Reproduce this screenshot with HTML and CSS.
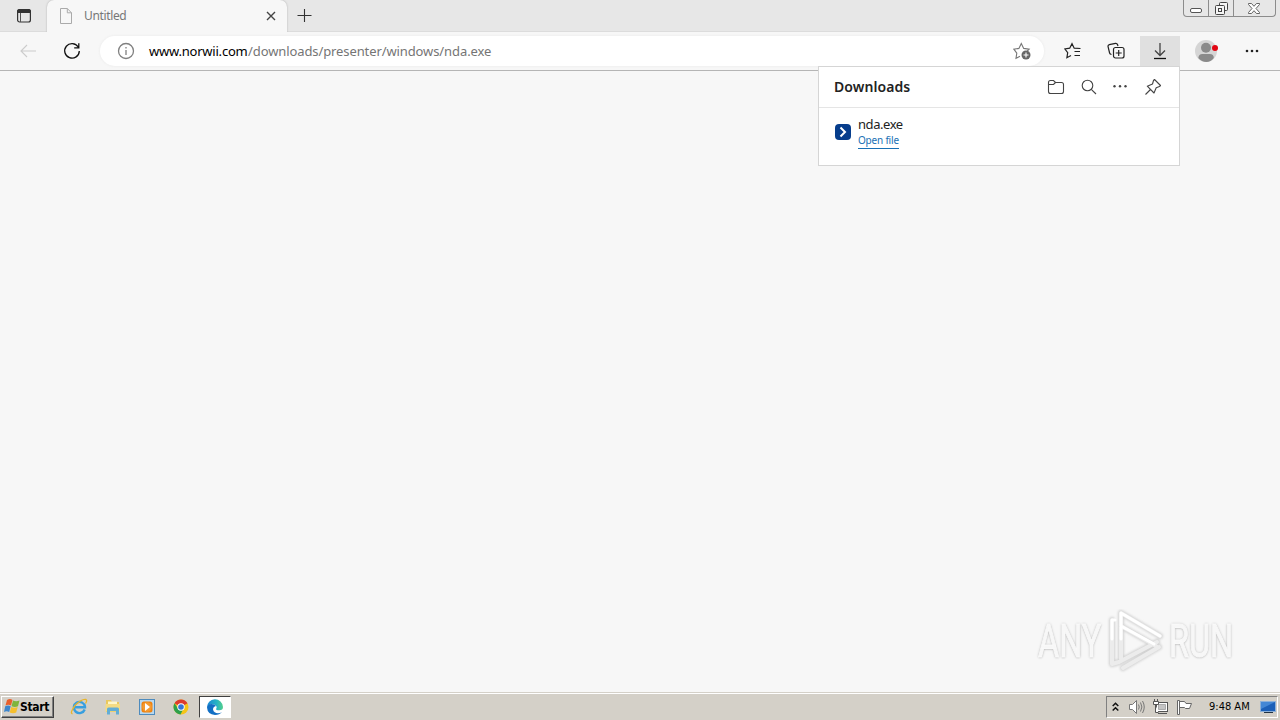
FILE: index.html
```html
<!DOCTYPE html>
<html lang="en">

<head>
    <meta charset="UTF-8">
    <title>Untitled</title>
    <link rel="stylesheet" href="styles.css">
</head>

<body>
    <!-- tabs -->
    <header class="tabstrip">
        <button class="tab-menu" aria-label="Tab actions">
            <svg width="16" height="16" viewBox="0 0 16 16"><rect x="1.6" y="1.6" width="12.8" height="12.4" rx="2" fill="none" stroke="#333" stroke-width="1.2"/><path d="M1 5V3.5Q1 1 3.5 1h9Q15 1 15 3.5V5z" fill="#333"/><path d="M4.500 5v9" stroke="#555"/></svg>
        </button>
        <div class="tab">
            <svg class="page-icon" width="14" height="16" viewBox="0 0 14 16" fill="none" stroke="#aaa"><path d="M1.5.5h6.800l4.200 4.300v10.700h-11zM8.300.5v4.300h4.200"/></svg>
            <span class="tab-title">Untitled</span>
            <svg class="tab-close" width="10" height="10" viewBox="0 0 10 10" stroke="#444" stroke-width="1.4"><path d="M1 1l8 8M9 1L1 9"/></svg>
        </div>
        <svg class="new-tab" width="15" height="15" viewBox="0 0 15 15" stroke="#333" stroke-width="1.1"><path d="M7.5 1v13M.5 7.5h14"/></svg>
        <div class="window-buttons">
            <span class="win min"><svg width="12" height="5" viewBox="0 0 12 5"><rect x=".5" y=".5" width="11" height="4" rx="1.5" fill="#fff" stroke="#555"/></svg></span>
            <span class="win max"><svg width="13" height="13" viewBox="0 0 13 13" fill="#f5f5f5" stroke="#444"><rect x="4.5" y=".5" width="8" height="8" rx="1"/><rect x=".5" y="3.5" width="9" height="9" rx="1"/><rect x="3.5" y="6.5" width="3" height="3"/></svg></span>
            <span class="win close"><svg width="12" height="11" viewBox="0 0 12 11" fill="#fff" stroke="#555" stroke-width=".9"><path d="M.5.5h3L6 3.300 8.500.5h3v1L8 5.500l3.500 4v1h-3L6 7.700 3.500 10.500h-3v-1L4 5.500.5 1.500z"/></svg></span>
        </div>
    </header>

    <!-- address bar -->
    <nav class="toolbar">
        <svg class="back" width="16" height="14" viewBox="0 0 16 14" fill="none" stroke="#ccc" stroke-width="1.1"><path d="M7 1L1 7l6 6M1 7h15"/></svg>
        <svg class="reload" width="18" height="18" viewBox="0 0 18 18" fill="none" stroke="#111" stroke-width="1.3"><path d="M15.200 5A7.300 7.300 0 1 0 16.300 9M15.800 1.200v4.600h-4.600"/></svg>
        <div class="address">
            <svg class="info" width="18" height="18" viewBox="0 0 18 18" fill="none" stroke="#808080" stroke-width="1.3"><circle cx="9" cy="9" r="7.5"/><path d="M9 8v5M9 5v1.500"/></svg>
            <span class="url"><span class="host">www.norwii.com</span><span class="path">/downloads/presenter/windows/nda.exe</span></span>
            <svg class="add-star" width="18" height="18" viewBox="0 0 18 18" fill="none" stroke="#777" stroke-width="1.1"><path d="M7 14.300l-4 2 .8-5.200L.9 7.200l5-.8L8.300 1.500l2.400 4.900 5.400.8-1.800 1.800"/><circle cx="13" cy="13" r="4.5" fill="#666" stroke="none"/><path d="M13 10.500v5M10.500 13h5" stroke="#fff"/></svg>
        </div>
        <div class="tools">
            <svg class="favorites" width="18" height="18" viewBox="0 0 18 18" fill="none" stroke="#222" stroke-width="1.2"><path d="M7 13.500l-4.100 2.200.8-5L.9 7l4.800-.8L8 1.700l2.200 4.500 6.300.3M10.500 9.500H16M10.500 13.500H16"/></svg>
            <svg class="collections" width="18" height="18" viewBox="0 0 18 18" fill="none" stroke="#222" stroke-width="1.2"><path d="M4.500 12.500Q2.900 12.300 2.600 11L1 4.500Q.8 3 2.300 2.600l6.200-1.300q1.500-.2 2 1.200l.5 1.500"/><rect x="6.5" y="5.5" width="10.5" height="10.5" rx="2"/><path d="M11.700 8v6M8.700 11h6"/></svg>
            <span class="download-button"><svg width="14" height="18" viewBox="0 0 14 18" fill="none" stroke="#444" stroke-width="1.3"><path d="M7 1v12M2 8.500l5 5 5-5"/><path d="M1 16.500h12" stroke="#111"/></svg></span>
            <span class="avatar"><svg width="24" height="24" viewBox="0 0 24 24"><circle cx="11" cy="12" r="11" fill="#d5d5d5"/><circle cx="11" cy="8.700" r="5" fill="#8a8a8a"/><path d="M3.300 19q.5-4 4-4h7.500q4 0 4 4-3 4-7.500 4t-8-4" fill="#8a8a8a"/><circle cx="20" cy="9" r="3" fill="#e20613"/></svg></span>
            <svg class="more" width="14" height="4" viewBox="0 0 14 4" fill="#222"><circle cx="2" cy="2" r="1.3"/><circle cx="7" cy="2" r="1.3"/><circle cx="12" cy="2" r="1.3"/></svg>
        </div>
    </nav>

    <main class="page">
        <div class="watermark">
            <span class="any">ANY</span>
            <svg width="58" height="64" viewBox="0 0 58 64" fill="none" stroke-linejoin="round" stroke-linecap="round">
                <g class="mark-shadow" stroke="#d2d2d2" stroke-width="6"><path d="M14 50V4l39 23M14 17l35 20M5 11v44l7-2 38-20M16 59l36-21"/></g>
                <g stroke="#ececec" stroke-width="4"><path d="M14 50V4l39 23M14 17l35 20M5 11v44l7-2 38-20M16 59l36-21"/></g>
                <path d="M14 30V4l39 23M14 17l33 18M5 30V11h3" stroke="#fff" stroke-width="3"/>
            </svg>
            <span class="run">RUN</span>
        </div>
    </main>

    <!-- downloads popup, hangs from the download button -->
    <section class="downloads">
        <div class="downloads-head">
            <h1>Downloads</h1>
            <div class="downloads-tools">
                <svg width="18" height="16" viewBox="0 0 18 16" fill="none" stroke="#444" stroke-width="1.1"><path d="M1.500 12.500v-9q0-2 2-2h3L8.500 3.500h6q2 0 2 2v7q0 2-2 2h-11q-2 0-2-2zM1.500 5.500h5l2-2"/></svg>
                <svg width="16" height="16" viewBox="0 0 16 16" fill="none" stroke="#444" stroke-width="1.1"><circle cx="6.5" cy="6.5" r="5.3"/><path d="M10.300 10.300L15 15"/></svg>
                <svg width="14" height="16" viewBox="0 0 14 16" fill="#444"><circle cx="1.5" cy="7.300" r="1.2"/><circle cx="7" cy="7.300" r="1.2"/><circle cx="12.5" cy="7.300" r="1.2"/></svg>
                <svg width="18" height="18" viewBox="0 0 18 18" fill="none" stroke="#444" stroke-width="1.1" stroke-linejoin="round"><path d="M10.500 1.500l6 6-1 1-3.300 1.200-2.200 5.300L3.300 8.200 8.500 6l1-3.500zM6.500 11.500L1.500 16.500"/></svg>
            </div>
        </div>
        <div class="download-item">
            <svg class="file-icon" width="16" height="16" viewBox="0 0 16 16"><rect width="16" height="16" rx="4" fill="#063d8c"/><path d="M5.500 3.500L10 8l-4.500 4.500" fill="none" stroke="#fff" stroke-width="2"/></svg>
            <div class="file">
                <span class="file-name">nda.exe</span>
                <a class="open-file">Open file</a>
            </div>
        </div>
    </section>

    <!-- taskbar -->
    <footer class="taskbar">
        <button class="start">
            <svg width="16" height="17" viewBox="0 0 16 17"><path d="M3 2q3-2 5.500 0L7 7.500Q4.500 6 1.500 7.500z" fill="#e8602c"/><path d="M9 2.500q3 1.500 6.500 0L14 8.200q-3 1.500-6.500 0z" fill="#7fb43c"/><path d="M1.200 8.300q3-1.500 5.500 0L5.200 14Q2.500 12.500 0 14z" fill="#3d86cc"/><path d="M7.200 9q3 1.500 6.500 0l-1.500 5.500q-3 1.500-6.500 0z" fill="#f6bf2d"/></svg>
            <span>Start</span>
        </button>
        <div class="quick">
            <svg width="18" height="18" viewBox="0 0 18 18" fill="none"><path d="M14.700 11.500A5.600 5.600 0 1 1 15 8.700V9.300H5" stroke="#389fdf" stroke-width="2.400"/><path d="M2.500 15.800Q-.5 15 5 7.500 12 .5 16 1.500q1.500 1-.5 4" stroke="#e8b52b" stroke-width="1.3"/></svg>
            <svg width="18" height="18" viewBox="0 0 18 18"><path d="M2 2h5l1 2h7v10H2z" fill="#e9c85d"/><path d="M4 3.500h9v5H4z" fill="#fff6c8"/><path d="M1.500 6h14.500v7.500H1.500z" fill="#f4db83"/><path d="M3 16.500V11q0-1.500 1.500-1.500h9Q15 9.500 15 11v5.500h-3V13H6v3.500z" fill="#63add5"/></svg>
            <svg width="18" height="18" viewBox="0 0 18 18"><rect x="1.5" y="1.5" width="15" height="15" fill="#b8d8ef" stroke="#4e8bbd"/><rect x="3.500" y="3.500" width="11" height="11" rx="2.500" fill="#f0820f"/><circle cx="9" cy="9" r="4.800" fill="#f49a30"/><path d="M7 5l5 4-5 4z" fill="#fff"/></svg>
            <svg width="18" height="18" viewBox="0 0 18 18"><circle cx="9" cy="9" r="7.5" fill="#f5c518"/><path d="M9 9L2.500 5.200A7.500 7.500 0 0 1 15.500 5.300z" fill="#dc3b2f"/><path d="M2.500 5.200A7.500 7.500 0 0 0 8.500 16.500L11.500 10.500 6 10.500z" fill="#2da04c"/><circle cx="9" cy="9" r="3.700" fill="#fff"/><circle cx="9" cy="9" r="2.800" fill="#3576d8"/></svg>
            <span class="task-active">
                <svg width="18" height="18" viewBox="0 0 18 18">
                    <defs><linearGradient id="wave"><stop offset="0" stop-color="#1b86d4"/><stop offset=".6" stop-color="#25b3c4"/><stop offset="1" stop-color="#55d08a"/></linearGradient></defs>
                    <path d="M1 9.500A8 8 0 0 1 17 9q0 3.300-3.700 3.300-3.300 0-3.300-1.300 1-1 .5-2.500Q9 5.500 5.500 6 2.500 6.500 1 9.500z" fill="url(#wave)"/>
                    <path d="M1 9.500Q1.500 6 5.500 6q3.500 0 4.500 2-3 .5-3 3.500 1 3.800 5 3.800 2.300 0 4-1.300Q13.500 17 9 17q-7.500-.5-8-7.500z" fill="#126fc4"/>
                </svg>
            </span>
        </div>
        <div class="tray">
            <svg class="chevrons" width="7" height="10" viewBox="0 0 7 10" fill="none" stroke="#111" stroke-width="1.5"><path d="M.7 4l2.800-2.800L6.300 4M.7 8.500l2.800-2.800 2.800 2.800"/></svg>
            <svg class="volume" width="17" height="16" viewBox="0 0 17 16" fill="#fff" stroke="#777"><path d="M1.500 5.500h3l4-4v13l-4-4h-3z"/><path d="M10.500 5.500q1.500 2.500 0 5M12.500 3.500q2.800 4.500 0 9M14.500 2q3.500 6 0 12" fill="none"/></svg>
            <svg class="network" width="17" height="16" viewBox="0 0 17 16" fill="#fff" stroke="#555"><rect x="4.5" y="3.5" width="11" height="9"/><path d="M6.500 5.500h7v5h-7z" fill="#c4c4c4" stroke="#aaa"/><path d="M6 14.500h9M2.500 0v3M5.500 0v3M1.500 2.500h5v3h-5zM3.500 6v7.500h3"/></svg>
            <svg class="flag" width="17" height="16" viewBox="0 0 17 16" fill="#fff" stroke="#666"><path d="M1.500 15.500v-14h2v14zM3.500 2.500h5l1.500 2h5.500l-2 5h-4L8.500 8.500h-5"/></svg>
            <span class="clock">9:48 AM</span>
            <svg class="desktop" width="16" height="14" viewBox="0 0 16 14"><rect x=".5" y="1.5" width="15" height="10" fill="#1c60b8" stroke="#8cb0d8"/><path d="M1 2h14L1 9z" fill="#4387d5"/><path d="M4 12.500h9" stroke="#234"/></svg>
        </div>
    </footer>
</body>

</html>
```
FILE: styles.css
```css
* {
    box-sizing: border-box;
}
html, body {
    height: 100%;
}
body {
    margin: 0;
    display: flex;
    flex-direction: column;
    position: relative;
    overflow: hidden;
    background: #f7f7f7;
    font-family: "Noto Sans", "Open Sans", sans-serif;
    color: #222;
}
svg {
    display: block;
    flex: none;
}
button {
    border: 0;
    padding: 0;
    background: none;
}

/* tabs */
.tabstrip {
    display: flex;
    flex: none;
    height: 32px;
    background: #e7e7e7;
    border-bottom: 1px solid #dcdcdc;
}
.tab-menu {
    width: 47px;
    padding: 0 0 0 16px;
}
.tab {
    display: flex;
    align-items: center;
    width: 240px;
    height: 32px;
    padding: 0 11px 0 12px;
    background: #f7f7f7;
    border-radius: 7px 7px 0 0;
    box-shadow: 0 0 2px #aaa;
    clip-path: inset(0 -3px 0 -3px);
}
.tab-title {
    flex: 1;
    margin-left: 11px;
    font-size: 12px;
    line-height: 16px;
    letter-spacing: -.35px;
    color: #777;
}
.new-tab {
    margin: 8px 0 0 10px;
}
.window-buttons {
    display: flex;
    width: 93px;
    height: 17px;
    margin: 0 4px 0 auto;
    border: 1px solid #8c8c8c;
    border-top: 0;
    border-radius: 0 0 4px 4px;
}
.win {
    display: flex;
    justify-content: center;
    align-items: center;
    width: 25px;
}
.win + .win {
    border-left: 1px solid #8c8c8c;
}
.min {
    width: 24px;
    padding-top: 5px;
}
.win.close {
    flex: 1;
    padding-right: 2px;
}

/* address bar */
.toolbar {
    display: flex;
    flex: none;
    align-items: center;
    height: 39px;
    padding-left: 20px;
    background: #f7f7f7;
    border-bottom: 1px solid #b5b5b5;
}
.reload {
    margin-left: 27px;
}
.address {
    display: flex;
    align-items: center;
    width: 944px;
    height: 30px;
    margin-left: 19px;
    padding: 0 13px 0 17px;
    border-radius: 15px;
    background: #fff;
    box-shadow: 0 0 2px 1px #f0f0f0;
}
.url {
    flex: 1;
    margin-left: 14px;
    font-size: 13px;
    line-height: 18px;
    white-space: nowrap;
}
.host {
    display: inline-block;
    width: 99px;
    letter-spacing: -.22px;
    color: #000;
}
.path {
    letter-spacing: -.1px;
    color: #757575;
}
.tools {
    display: flex;
    align-items: center;
    height: 100%;
}
.favorites {
    margin-left: 20px;
}
.collections {
    margin-left: 25px;
}
.download-button {
    display: flex;
    justify-content: center;
    align-items: center;
    width: 40px;
    height: 30px;
    margin-left: 15px;
    background: #e0e0e0;
}
.avatar {
    margin-left: 15px;
}
.more {
    margin-left: 26px;
}

/* page */
.page {
    display: flex;
    flex: 1;
    justify-content: flex-end;
    align-items: flex-end;
    padding: 0 47px 19px 0;
}
.watermark {
    display: flex;
    align-items: center;
    font-family: Roboto, sans-serif;
    font-size: 47px;
    line-height: 64px;
    color: #f7f7f7;
    text-shadow: 0 0 3px #aaa, 0 1px 2px #ccc;
}
.watermark svg {
    margin: 0 4px 0 5px;
}
.mark-shadow {
    filter: blur(1px);
}
.any, .run {
    width: 64px;
    -webkit-text-stroke: 1px #f9f9f9;
    transform: scaleX(.69);
    transform-origin: 0 50%;
}

/* downloads popup */
.downloads {
    position: absolute;
    top: 66px;
    left: 818px;
    width: 362px;
    height: 100px;
    background: #fff;
    border: 1px solid #d5d5d5;
}
.downloads-head {
    display: flex;
    justify-content: space-between;
    align-items: center;
    height: 41px;
    padding: 0 17px 0 15px;
    border-bottom: 1px solid #e5e5e5;
}
.downloads h1 {
    margin: 0 0 2px;
    font-size: 14px;
    font-weight: 600;
    letter-spacing: .08px;
}
.downloads-tools {
    display: flex;
    align-items: center;
    gap: 16px;
}
.downloads-tools svg:nth-child(3) {
    margin: 0 1px 0 0;
}
.download-item {
    display: flex;
    padding: 8px 16px;
}
.file-icon {
    margin-top: 8px;
}
.file {
    display: flex;
    flex-direction: column;
    align-items: flex-start;
    margin-left: 7px;
}
.file-name {
    font-size: 13px;
    line-height: 17px;
    letter-spacing: -.45px;
}
.open-file {
    padding-bottom: 1px;
    font-size: 10px;
    line-height: 14px;
    letter-spacing: -.2px;
    color: #1870b5;
    border-bottom: 1px solid #1870b5;
}

/* taskbar */
.taskbar {
    display: flex;
    flex: none;
    align-items: center;
    height: 28px;
    padding: 1px 2px 1px 1px;
    background: #d4d0c8;
    border-top: 1px solid #d4d0c8;
    box-shadow: inset 0 1px #fff;
    font-family: "DejaVu Sans Condensed", "DejaVu Sans", sans-serif;
}
.start {
    display: flex;
    align-items: center;
    width: 53px;
    height: 22px;
    padding-left: 2px;
    border: 1px solid;
    border-color: #fff #404040 #404040 #fff;
    box-shadow: inset -1px -1px #808080;
    background: #d4d0c8;
    font: bold 12px "DejaVu Sans Condensed", "DejaVu Sans", sans-serif;
    letter-spacing: -.3px;
    color: #000;
}
.quick {
    display: flex;
    align-items: center;
    gap: 16px;
    margin-left: 16px;
}
.task-active {
    display: flex;
    justify-content: center;
    align-items: center;
    width: 32px;
    height: 22px;
    margin-left: -7px;
    border: 1px solid;
    border-color: #404040 #fff #fff #404040;
    background: #fff;
}
.tray {
    display: flex;
    align-items: center;
    width: 172px;
    height: 22px;
    margin-left: auto;
    padding-left: 5px;
    border: 1px solid;
    border-color: #808080 #fff #fff #808080;
}
.volume {
    margin-left: 9px;
}
.network {
    margin-left: 7px;
}
.flag {
    margin-left: 7px;
}
.clock {
    width: 42px;
    margin-left: 16px;
    font-size: 11px;
    white-space: nowrap;
    color: #000;
}
.desktop {
    margin-left: 9px;
}
```
